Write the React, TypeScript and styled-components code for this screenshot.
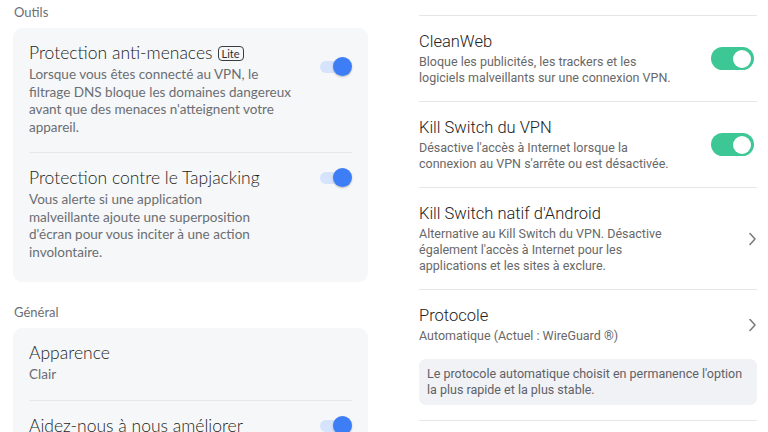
import React from 'react';
import styled, {createGlobalStyle} from "styled-components";

const GlobalStyle = createGlobalStyle`
    html, body {
        margin: 0;
        padding: 0;
        background: #ffffff;
    }
    * {
        box-sizing: border-box;
    }
`

type LeftItem = {
    title: string;
    text?: string;
    badge?: string;
    toggle?: boolean;
    toggleOffset?: number;
    textWidth?: number;
}

type RightItem = {
    title: string;
    text: string;
    control: "toggle" | "chevron";
    note?: string;
}

const tools: LeftItem[] = [
    {
        title: "Protection anti-menaces",
        badge: "Lite",
        text: "Lorsque vous êtes connecté au VPN, le filtrage DNS bloque les domaines dangereux avant que des menaces n'atteignent votre appareil.",
        toggle: true,
        toggleOffset: 14,
        textWidth: 272,
    },
    {
        title: "Protection contre le Tapjacking",
        text: "Vous alerte si une application malveillante ajoute une superposition d'écran pour vous inciter à une action involontaire.",
        toggle: true,
        textWidth: 246,
    },
]

const general: LeftItem[] = [
    {title: "Apparence", text: "Clair"},
    {title: "Aidez-nous à nous améliorer", toggle: true},
]

const vpn: RightItem[] = [
    {
        title: "CleanWeb",
        text: "Bloque les publicités, les trackers et les logiciels malveillants sur une connexion VPN.",
        control: "toggle",
    },
    {
        title: "Kill Switch du VPN",
        text: "Désactive l'accès à Internet lorsque la connexion au VPN s'arrête ou est désactivée.",
        control: "toggle",
    },
    {
        title: "Kill Switch natif d'Android",
        text: "Alternative au Kill Switch du VPN. Désactive également l'accès à Internet pour les applications et les sites à exclure.",
        control: "chevron",
    },
    {
        title: "Protocole",
        text: "Automatique (Actuel : WireGuard ®)",
        control: "chevron",
        note: "Le protocole automatique choisit en permanence l'option la plus rapide et la plus stable.",
    },
]

const Chevron = () => (
    <ChevronIcon width="9" height="14" viewBox="0 0 9 14">
        <path d="M2 1.5 L7 7 L2 12.5" fill="none" stroke="#7b7b7b" strokeWidth="1.6" strokeLinecap="round" strokeLinejoin="round"/>
    </ChevronIcon>
)

const LeftSection = (props: {label: string; items: LeftItem[]}) => {
    return (
        <Section>
            <SectionLabel>{props.label}</SectionLabel>
            <Card>
                {props.items.map((item) => (
                    <CardRow key={item.title}>
                        <RowText>
                            <TitleLine>
                                <LeftTitle>{item.title}</LeftTitle>
                                {item.badge && <Badge>{item.badge}</Badge>}
                            </TitleLine>
                            {item.text && <LeftText width={item.textWidth ?? 272}>{item.text}</LeftText>}
                        </RowText>
                        {item.toggle && (
                            <BlueToggle offset={item.toggleOffset ?? 0}>
                                <BlueTrack/>
                                <BlueKnob/>
                            </BlueToggle>
                        )}
                    </CardRow>
                ))}
            </Card>
        </Section>
    )
}

export default function App() {
    return (
        <>
            <GlobalStyle/>
            <Page>
                <LeftColumn>
                    <LeftSection label="Outils" items={tools}/>
                    <LeftSection label="Général" items={general}/>
                </LeftColumn>
                <RightList>
                    {vpn.map((item) => (
                        <ListItem key={item.title}>
                            <ListRow>
                                <RowText>
                                    <RightTitle>{item.title}</RightTitle>
                                    <RightText>{item.text}</RightText>
                                </RowText>
                                {item.control === "toggle" ? (
                                    <GreenToggle>
                                        <GreenKnob/>
                                    </GreenToggle>
                                ) : (
                                    <Chevron/>
                                )}
                            </ListRow>
                            {item.note && <Note>{item.note}</Note>}
                        </ListItem>
                    ))}
                </RightList>
            </Page>
        </>
    );
}

const Page = styled.div`
    width: 768px;
    height: 432px;
    overflow: hidden;
    display: grid;
    grid-template-columns: 355px 338px;
    column-gap: 51px;
    padding: 0 11px 0 13px;
    align-items: start;
`

const LeftColumn = styled.div`
    display: flex;
    flex-direction: column;
    gap: 22px;
    padding-top: 4px;
    font-family: Lato, "Noto Sans", sans-serif;
`

const Section = styled.div`
    display: flex;
    flex-direction: column;
    gap: 8px;
`

const SectionLabel = styled.div`
    font-size: 13px;
    line-height: 16px;
    color: #6b6e73;
    padding-left: 1px;
`

const Card = styled.div`
    background: #f6f7f8;
    border-radius: 9px;
    padding: 0 16px 5px;
    display: flex;
    flex-direction: column;
`

const CardRow = styled.div`
    display: flex;
    align-items: flex-start;
    gap: 16px;
    padding: 14px 0 16px;

    & + & {
        border-top: 1px solid #e7e8ea;
    }
`

const RowText = styled.div`
    flex: 1;
    min-width: 0;
`

const TitleLine = styled.div`
    display: flex;
    align-items: center;
    gap: 5px;
`

const LeftTitle = styled.div`
    font-size: 17.5px;
    font-weight: 300;
    line-height: 22px;
    color: #1c1e21;
`

const Badge = styled.span`
    font-size: 11px;
    line-height: 13px;
    color: #2d2f33;
    border: 1.2px solid #3a3c40;
    border-radius: 4px;
    padding: 0 3px;
    margin-top: 1px;
`

const LeftText = styled.div<{width: number}>`
    margin-top: 2px;
    max-width: ${props => props.width}px;
    font-size: 13.5px;
    line-height: 17.5px;
    color: #6b6e73;
`

const BlueToggle = styled.div<{offset: number}>`
    position: relative;
    flex: none;
    width: 32px;
    height: 20px;
    margin-top: ${props => 1 + props.offset}px;
`

const BlueTrack = styled.div`
    position: absolute;
    left: 0;
    top: 4px;
    width: 28px;
    height: 12px;
    border-radius: 6px;
    background: #d6e3fc;
`

const BlueKnob = styled.div`
    position: absolute;
    right: 0;
    top: 0;
    width: 19px;
    height: 19px;
    border-radius: 50%;
    background: #3d7ef6;
    box-shadow: 0 1px 2px rgba(0, 0, 0, 0.25);
`

const RightList = styled.div`
    display: flex;
    flex-direction: column;
    padding-top: 15px;
    font-family: Roboto, "Noto Sans", sans-serif;
    border-bottom: 1px solid #e6e6e6;
`

const ListItem = styled.div`
    border-top: 1px solid #e6e6e6;
    padding: 15px 0;
    display: flex;
    flex-direction: column;
    gap: 15px;
`

const ListRow = styled.div`
    display: flex;
    align-items: center;
    gap: 16px;
`

const RightTitle = styled.div`
    font-size: 16.5px;
    font-weight: 300;
    line-height: 22px;
    color: #222222;
`

const RightText = styled.div`
    margin-top: 1px;
    max-width: 258px;
    font-size: 12.5px;
    line-height: 16px;
    color: #686868;
`

const GreenToggle = styled.div`
    flex: none;
    width: 43px;
    height: 23px;
    border-radius: 12px;
    background: #3dc795;
    margin-right: 3px;
    display: flex;
    align-items: center;
    justify-content: flex-end;
    padding-right: 3px;
`

const GreenKnob = styled.div`
    width: 18px;
    height: 18px;
    border-radius: 50%;
    background: #ffffff;
`

const ChevronIcon = styled.svg`
    flex: none;
    display: block;
`

const Note = styled.div`
    background: #f1f2f6;
    border-radius: 7px;
    padding: 7px 8px;
    font-size: 12.5px;
    line-height: 16px;
    color: #5f6166;
`
